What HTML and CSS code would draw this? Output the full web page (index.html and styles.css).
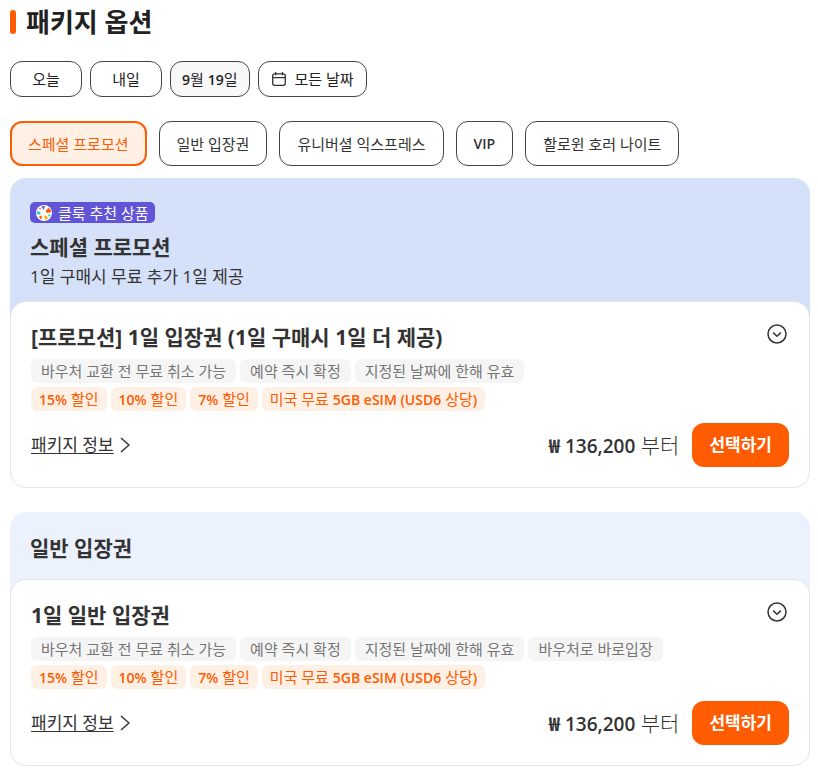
FILE: index.html
```html
<!DOCTYPE html>
<html lang="ko">
<head>
<meta charset="utf-8">
<meta name="viewport" content="width=device-width, initial-scale=1">
<title>패키지 옵션</title>
<link rel="stylesheet" href="styles.css">
</head>
<body>
<main class="packages">
  <h1 class="heading">패키지 옵션</h1>

  <div class="dates">
    <button type="button" class="date">오늘</button>
    <button type="button" class="date">내일</button>
    <button type="button" class="date date-muted"><span><span class="latin">9</span>월 <span class="latin">19</span>일</span></button>
    <button type="button" class="date date-all">
      <svg class="calendar" viewBox="0 0 16 16" aria-hidden="true"><rect x="1.7" y="2.9" width="12.6" height="11.4" rx="2"/><path d="M1.7 6.6h12.6M4.6 1v3.2M11.4 1v3.2"/></svg>
      모든 날짜
    </button>
  </div>

  <div class="filters">
    <button type="button" class="filter filter-active" aria-pressed="true">스페셜 프로모션</button>
    <button type="button" class="filter">일반 입장권</button>
    <button type="button" class="filter">유니버셜 익스프레스</button>
    <button type="button" class="filter"><span class="latin">VIP</span></button>
    <button type="button" class="filter">할로윈 호러 나이트</button>
  </div>

  <section class="group group-promo">
    <header class="group-head">
      <div class="badge">
        <svg class="badge-icon" viewBox="0 0 16 16" aria-hidden="true">
          <circle cx="8" cy="8" r="8" fill="#fff"/>
          <path d="M5.3 1.6Q8 .5 9 1.1L7.6 5Z" fill="#6254d6"/>
          <path d="M10 5.4L12.6 2.8Q15 4.8 15.2 7L11.6 8Q9.6 7.4 10 5.4Z" fill="#ff5b00"/>
          <path d="M2.6 3.4L4.4 2.8 5.2 4.8Z" fill="#ff5b00"/>
          <path d="M1 6L4.6 7.2 4.2 9.4 1.2 9.2Z" fill="#17c3ce"/>
          <path d="M2.8 12L5.4 10.2 6 13.8 4.8 14Z" fill="#ff5b00"/>
          <path d="M8 10.6L10.6 11 12.2 13.2Q10.6 14.8 9 14.8Z" fill="#ffb200"/>
          <path d="M12 9.4L14.6 9.6 13.2 12Z" fill="#17c3ce"/>
        </svg>
        클룩 추천 상품
      </div>
      <h2 class="group-title">스페셜 프로모션</h2>
      <p class="group-note">1일 구매시 무료 추가 1일 제공</p>
    </header>
    <article class="card">
      <div class="card-top">
        <h3 class="card-title">[프로모션] 1일 입장권 (1일 구매시 1일 더 제공)</h3>
        <button type="button" class="toggle" aria-label="펼치기"><svg viewBox="0 0 20 20" aria-hidden="true"><circle cx="10" cy="10" r="9"/><path d="M6.2 8.6L10 12.2l3.8-3.6"/></svg></button>
      </div>
      <ul class="tags">
        <li class="tag">바우처 교환 전 무료 취소 가능</li>
        <li class="tag">예약 즉시 확정</li>
        <li class="tag">지정된 날짜에 한해 유효</li>
      </ul>
      <ul class="tags">
        <li class="tag tag-deal"><span class="latin">15%</span> 할인</li>
        <li class="tag tag-deal"><span class="latin">10%</span> 할인</li>
        <li class="tag tag-deal"><span class="latin">7%</span> 할인</li>
        <li class="tag tag-deal">미국 무료 <span class="latin">5GB eSIM (USD6</span> 상당<span class="latin">)</span></li>
      </ul>
      <div class="card-bottom">
        <a class="info" href="#"><span class="info-text">패키지 정보</span><svg viewBox="0 0 10 16" aria-hidden="true"><path d="M1 1l8 7-8 7"/></svg></a>
        <p class="price"><span class="amount">₩ 136,200</span> 부터</p>
        <button type="button" class="select">선택하기</button>
      </div>
    </article>
  </section>

  <section class="group">
    <header class="group-head">
      <h2 class="group-title">일반 입장권</h2>
    </header>
    <article class="card">
      <div class="card-top">
        <h3 class="card-title">1일 일반 입장권</h3>
        <button type="button" class="toggle" aria-label="펼치기"><svg viewBox="0 0 20 20" aria-hidden="true"><circle cx="10" cy="10" r="9"/><path d="M6.2 8.6L10 12.2l3.8-3.6"/></svg></button>
      </div>
      <ul class="tags">
        <li class="tag">바우처 교환 전 무료 취소 가능</li>
        <li class="tag">예약 즉시 확정</li>
        <li class="tag">지정된 날짜에 한해 유효</li>
        <li class="tag">바우처로 바로입장</li>
      </ul>
      <ul class="tags">
        <li class="tag tag-deal"><span class="latin">15%</span> 할인</li>
        <li class="tag tag-deal"><span class="latin">10%</span> 할인</li>
        <li class="tag tag-deal"><span class="latin">7%</span> 할인</li>
        <li class="tag tag-deal">미국 무료 <span class="latin">5GB eSIM (USD6</span> 상당<span class="latin">)</span></li>
      </ul>
      <div class="card-bottom">
        <a class="info" href="#"><span class="info-text">패키지 정보</span><svg viewBox="0 0 10 16" aria-hidden="true"><path d="M1 1l8 7-8 7"/></svg></a>
        <p class="price"><span class="amount">₩ 136,200</span> 부터</p>
        <button type="button" class="select">선택하기</button>
      </div>
    </article>
  </section>
</main>
</body>
</html>
```
FILE: styles.css
```css
* {
  box-sizing: border-box;
}

body,
h1,
h2,
h3,
p,
ul {
  margin: 0;
  padding: 0;
}

body {
  background: #fff;
  color: #333;
  font-family: "Open Sans", "Noto Sans CJK KR", sans-serif;
  font-size: 15px;
  line-height: 20px;
}

button {
  font: inherit;
  color: inherit;
  cursor: pointer;
  white-space: nowrap;
}

svg {
  display: block;
  fill: none;
  stroke: #333;
  flex: none;
}

.latin {
  font-size: 14px;
  font-weight: 600;
}

.packages {
  padding: 6px 8px 10px 10px;
}

.heading {
  display: flex;
  align-items: center;
  gap: 10px;
  color: #212121;
  font-size: 26px;
  line-height: 32px;
  font-weight: 700;
}

.heading::before {
  content: "";
  width: 6px;
  height: 24px;
  border-radius: 3px;
  background: #ff5b00;
}

.dates {
  display: flex;
  flex-wrap: wrap;
  gap: 8px;
  margin-top: 23px;
}

.date {
  display: flex;
  align-items: center;
  justify-content: center;
  min-width: 72px;
  height: 36px;
  padding: 0 11px;
  border: 1px solid #444;
  border-radius: 12px;
  background: #fff;
  color: #212121;
}

.date-muted {
  background: #f8f8f8;
}

.date-all {
  gap: 8px;
  padding: 0 12px;
}

.calendar {
  width: 16px;
  height: 16px;
  stroke-width: 1.3;
}

.filters {
  display: flex;
  flex-wrap: wrap;
  gap: 12px;
  margin-top: 24px;
}

.filter {
  height: 45px;
  padding: 0 17px;
  border: 1px solid #444;
  border-radius: 12px;
  background: #fff;
}

.filter-active {
  padding: 0 16px;
  border: 2px solid #ff5b00;
  background: #fff0e5;
  color: #ff5b00;
}

.group {
  margin-top: 24px;
  border-radius: 16px;
  background: linear-gradient(#ebf2fd 120px, transparent 120px);
}

.group-promo {
  margin-top: 12px;
  background: linear-gradient(#d5e0f9 150px, transparent 150px);
}

.group-head {
  padding: 24px 20px 18px;
}

.group-promo .group-head {
  padding-bottom: 12px;
}

.badge {
  display: flex;
  align-items: center;
  gap: 6px;
  width: fit-content;
  height: 21px;
  margin-bottom: 12px;
  padding: 0 6px;
  border-radius: 5px;
  background: #6254d6;
  color: #fff;
}

.badge-icon {
  width: 16px;
  height: 16px;
  stroke: none;
}

.group-title,
.card-title {
  font-size: 21px;
  line-height: 25px;
  font-weight: 700;
}

.group-note {
  margin-top: 4px;
  font-size: 17px;
  line-height: 25px;
}

.card {
  padding: 20px;
  border: 1px solid #e6e6e6;
  border-radius: 16px;
  background: #fff;
}

.card-top {
  display: flex;
  align-items: flex-start;
  justify-content: space-between;
  padding-top: 2px;
  margin-bottom: 8px;
}

.card-title {
  line-height: 27px;
}

.toggle {
  padding: 0;
  border: 0;
  margin-right: 2px;
  background: none;
}

.toggle svg {
  width: 20px;
  height: 20px;
  stroke-width: 1.5;
}

.tags {
  display: flex;
  flex-wrap: wrap;
  gap: 4px;
  margin-bottom: 4px;
  list-style: none;
}

.tag {
  height: 24px;
  padding: 0 10px;
  border-radius: 6px;
  background: #f5f5f5;
  color: #757575;
  line-height: 24px;
}

.tag-deal {
  padding: 0 8px;
  background: #fff0e5;
  color: #ff5b00;
}

.card-bottom {
  display: flex;
  align-items: center;
  margin-top: 12px;
}

.info {
  display: flex;
  align-items: center;
  gap: 6px;
  margin-right: auto;
  color: #333;
  font-size: 17px;
  text-decoration: none;
}

.info-text {
  text-decoration: underline 1px;
  text-underline-offset: 2px;
}

.info svg {
  width: 10px;
  height: 16px;
  stroke-width: 1.5;
}

.price {
  font-size: 21px;
  font-weight: 300;
}

.amount {
  font-size: 19px;
  font-weight: 600;
}

.select {
  height: 44px;
  margin-left: 13px;
  padding: 0 17px;
  border: 0;
  border-radius: 12px;
  background: #ff5b00;
  color: #fff;
  font-size: 17px;
  font-weight: 700;
}
```
